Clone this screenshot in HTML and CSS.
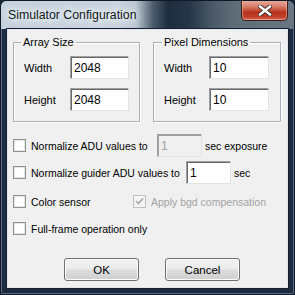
FILE: index.html
```html
<!DOCTYPE html>
<html>
<head>
<meta charset="utf-8">
<link rel="stylesheet" href="styles.css">
</head>
<body>
<div class="window">
  <div class="titlebar">
    <span class="title">Simulator Configuration</span>
    <div class="close">
      <svg width="14" height="11" viewBox="0 0 14 11">
        <path d="M2 1.5 L12 9.5 M12 1.5 L2 9.5" stroke="#3a2a28" stroke-width="4.2" stroke-linecap="square" fill="none"/>
        <path d="M2 1.5 L12 9.5 M12 1.5 L2 9.5" stroke="#ffffff" stroke-width="2.4" stroke-linecap="square" fill="none"/>
      </svg>
    </div>
  </div>
  <div class="client">
    <div class="groups">
      <fieldset class="group g1">
        <legend>Array Size</legend>
        <div class="grid">
          <span class="lbl">Width</span><div class="edit">2048</div>
          <span class="lbl">Height</span><div class="edit">2048</div>
        </div>
      </fieldset>
      <fieldset class="group g2">
        <legend>Pixel Dimensions</legend>
        <div class="grid">
          <span class="lbl">Width</span><div class="edit">10</div>
          <span class="lbl">Height</span><div class="edit">10</div>
        </div>
      </fieldset>
    </div>
    <div class="opts">
      <div class="row r1">
        <span class="cb"></span>
        <span class="txt w1">Normalize ADU values to</span>
        <div class="edit small disabled">1</div>
        <span class="txt after">sec exposure</span>
      </div>
      <div class="row r2">
        <span class="cb"></span>
        <span class="txt w2">Normalize guider ADU values to</span>
        <div class="edit small">1</div>
        <span class="txt after">sec</span>
      </div>
      <div class="row r3">
        <span class="cb"></span>
        <span class="txt w3">Color sensor</span>
        <span class="cb dis"><svg width="11" height="11" viewBox="0 0 11 11"><path d="M2 5 L4.5 7.5 L9 2.5" stroke="#a8a8a8" stroke-width="1.6" fill="none"/></svg></span>
        <span class="txt gray">Apply bgd compensation</span>
      </div>
      <div class="row r4">
        <span class="cb"></span>
        <span class="txt">Full-frame operation only</span>
      </div>
    </div>
    <div class="buttons">
      <div class="btn">OK</div>
      <div class="btn">Cancel</div>
    </div>
  </div>
</div>
</body>
</html>
```
FILE: styles.css
```css
* { box-sizing: border-box; }
html, body { margin: 0; padding: 0; }
body { width: 295px; height: 295px; overflow: hidden; background: #1a2a3c; }
.window {
  width: 295px; height: 295px;
  display: flex; flex-direction: column;
  background: #1c2c40;
  border: 1px solid #0e1826;
  border-radius: 6px 6px 2px 2px;
  box-shadow: inset 0 0 0 1px #5a6c80;
  font-family: "Liberation Sans", Arial, sans-serif;
  font-size: 10.5px;
  color: #000;
  overflow: hidden;
}
.titlebar {
  height: 28px;
  flex: none;
  display: flex;
  align-items: flex-start;
  padding: 0 6px 0 7px;
  background: linear-gradient(90deg, #c4d1dd 0%, #c8d4df 40%, #b9c6d2 46%, #4b5b6c 52%, #1e2d3e 57%, #253446 64%, #4a5967 72%, #5f6d79 80%, #6a7783 100%);
  border-radius: 5px 5px 0 0;
}
.title {
  margin-top: 7px;
  font-family: "Liberation Sans", Arial, sans-serif;
  font-size: 12.3px;
  color: #101820;
  text-shadow: 0 0 6px #fff, 0 0 10px #fff, 0 0 14px #eef3f8;
}
.close {
  margin-left: auto;
  margin-top: -1px;
  width: 47px; height: 21px;
  border: 1px solid #3a1c18;
  border-top: none;
  border-radius: 0 0 5px 5px;
  background: linear-gradient(180deg, #e9b0a2 0%, #d98370 30%, #c8503a 50%, #b8321c 62%, #c2402a 85%, #d8705a 100%);
  box-shadow: inset 0 0 0 1px rgba(255,210,200,0.45);
  display: flex; align-items: center; justify-content: center;
}
.close svg { display: block; margin-top: 1px; }
.client {
  flex: 1;
  margin: 0 6px 6px 6px;
  background: #f0f0f0;
  border: 1px solid #dfe6ed;
  outline: 1px solid #16222f;
  display: flex; flex-direction: column;
}
.groups {
  display: flex;
  gap: 13px;
  margin: 6px 0 0 5px;
}
.group {
  margin: 0;
  padding: 7px 0 10px 10px;
  border: 1px solid #a9b0b5;
  box-shadow: inset 1px 1px 0 #fff, 1px 1px 0 #fff;
  min-width: 0;
}
.g1 { width: 127px; }
.g2 { width: 128px; }
.group legend {
  padding: 0 2px;
  margin-left: -2px;
  line-height: 13px;
  font-size: 11px;
}
.g1 legend { margin-left: -3px; }
.grid {
  display: grid;
  grid-template-columns: 46px 59px;
  row-gap: 9px;
  align-items: center;
  font-size: 11px;
}
.g2 .grid { grid-template-columns: 45px 60px; }
.edit {
  height: 23px;
  background: #fff;
  border-top: 1px solid #a0a0a0;
  border-left: 1px solid #a0a0a0;
  border-right: 1px solid #e3e3e3;
  border-bottom: 1px solid #e3e3e3;
  box-shadow: inset 1px 1px 0 #696969;
  padding: 4px 0 0 3px;
  font-size: 12px;
  line-height: 14px;
}
.edit.small { width: 45px; height: 23px; flex: none; }
.edit.disabled { background: #f0f0f0; color: #a0a0a0; box-shadow: inset 1px 1px 0 #a0a0a0; }
.opts {
  margin: 12px 0 0 5px;
  display: flex; flex-direction: column;
}
.row {
  display: flex; align-items: center;
  height: 23px;
}
.r2 { margin-top: 4px; }
.r3 { margin-top: 6px; }
.r4 { margin-top: 4px; }
.cb {
  width: 13px; height: 13px;
  flex: none;
  border: 1px solid #8e8f8f;
  background: #fff;
  box-shadow: inset 0 0 0 1px #e6e6e6;
  display: flex; align-items: center; justify-content: center;
}
.cb.dis { border-color: #c0c0c0; background: #f4f4f4; box-shadow: none; }
.txt { margin-left: 5px; white-space: nowrap; }
.w1 { width: 126px; flex: none; }
.w2 { width: 155px; flex: none; }
.w3 { width: 102px; flex: none; }
.after { margin-left: 3px; }
.gray { color: #a3a3a3; margin-left: 5px; }
.buttons {
  margin-top: auto;
  margin-bottom: 6px;
  display: flex;
  gap: 26px;
  padding-left: 56px;
}
.btn {
  width: 75px; height: 23px;
  border: 1px solid #707070;
  border-radius: 3px;
  background: linear-gradient(180deg, #f2f2f2 0%, #ebebeb 48%, #dddddd 52%, #cfcfcf 100%);
  box-shadow: inset 0 0 0 1px #fcfcfc;
  display: flex; align-items: center; justify-content: center;
  font-size: 11.5px;
}
```
